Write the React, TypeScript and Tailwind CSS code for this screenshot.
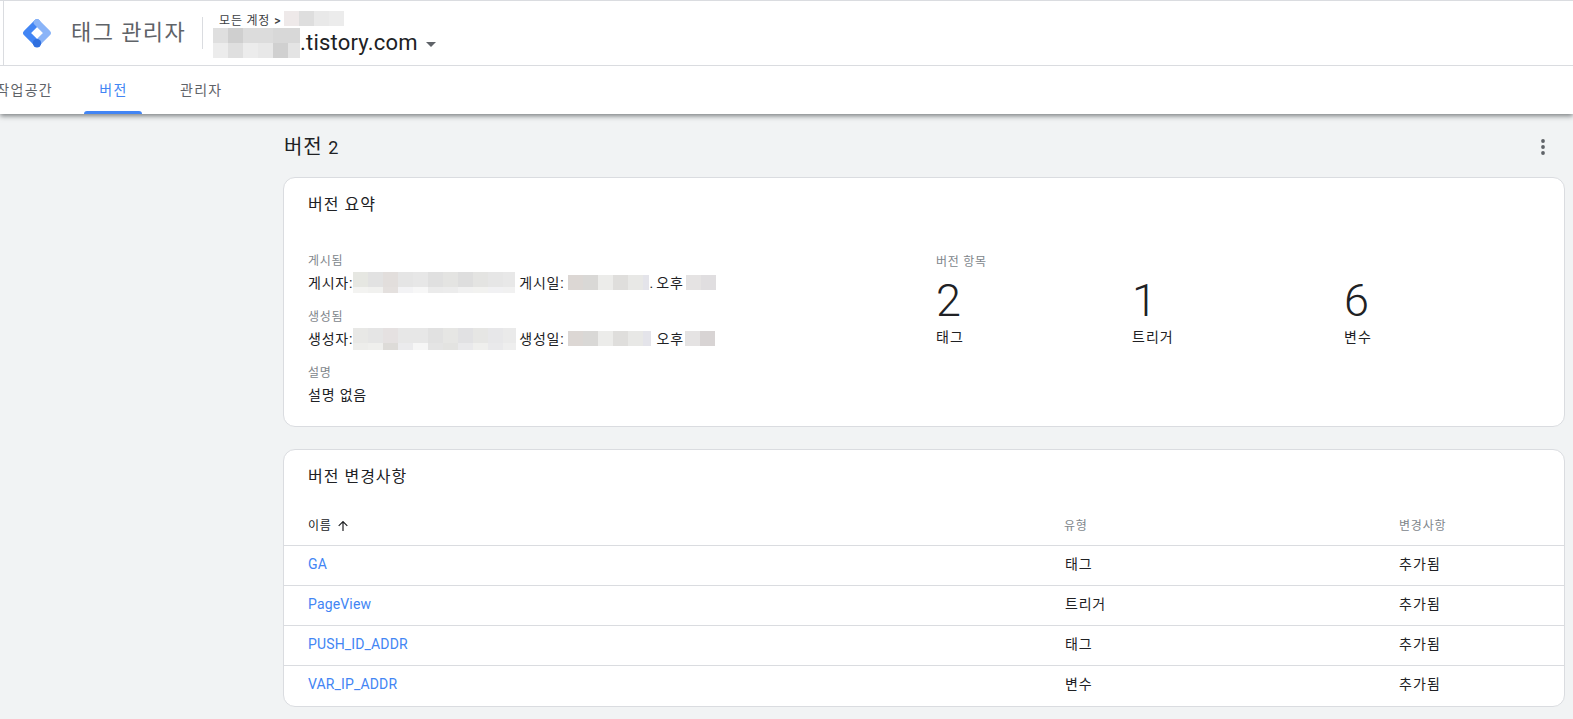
const font = { fontFamily: 'Roboto, "Noto Sans CJK KR", sans-serif' };

function Mosaic({ rows, cell = 15, heights, className = "" }: { rows: string[][]; cell?: number; heights?: number[]; className?: string }) {
  return (
    <span className={`inline-flex shrink-0 flex-col overflow-hidden align-middle ${className}`}>
      {rows.map((r, i) => (
        <span key={i} className="flex">
          {r.map((c, j) => (
            <span key={j} className="shrink-0" style={{ background: c, width: cell, height: heights ? heights[i] : cell }} />
          ))}
        </span>
      ))}
    </span>
  );
}

const nameRow1 = [
  ["#e6e7e2", "#e2e2e2", "#e2dedc", "#e5e5e5", "#e7e7e7", "#e0e0e0", "#e4e4e2", "#dedede", "#e4e4e2", "#e6e6e6", "#e8e8e8"],
  ["#f3f3f1", "#f1f1ef", "#e4e0de", "#f3f3f5", "#f7f7f7", "#ebebeb", "#ececec", "#f1f1f1", "#f2f2f0", "#f1f1f3", "#f1f1f1"],
];
const nameRow2 = [
  ["#e8e8e6", "#e5e5e5", "#e5e1e1", "#e7e7e7", "#e7e7e7", "#e1e1e1", "#e6e6e4", "#e1e1e3", "#e6e6e4", "#e7e7e9", "#eaeaea"],
  ["#ededeb", "#efefed", "#dddbd8", "#ebebed", "#f6f6f6", "#e4e4e4", "#e3e3e1", "#e9e9eb", "#efefed", "#e9e9eb", "#eeeeee"],
];
const date = ["#dcd7d4", "#d9d8d6", "#ececea", "#dfdedc", "#e8e8e6", "#e4e4ea"];

function Label({ children }: { children: React.ReactNode }) {
  return <div className="text-xs leading-4 tracking-[0.7px] text-[#80868b]">{children}</div>;
}

function Stat({ n, label, className }: { n: string; label: string; className: string }) {
  return (
    <div className={className}>
      <div className="text-[45px] font-light leading-[48px] text-[#202124]">{n}</div>
      <div className="mt-[2px] text-sm leading-5 tracking-[1px] text-[#202124]">{label}</div>
    </div>
  );
}

const rows = [
  ["GA", "태그"],
  ["PageView", "트리거"],
  ["PUSH_ID_ADDR", "태그"],
  ["VAR_IP_ADDR", "변수"],
];

export default function App() {
  return (
    <div style={font} className="h-[719px] overflow-hidden bg-[#f1f3f4]">
      <div className="relative z-10 bg-white shadow-[0_2px_5px_rgba(60,64,67,0.65)]">
        <header className="flex h-[66px] border-b border-t border-[#dadce0]">
          <div className="ml-[3px] flex flex-1 items-center border-l border-[#dadce0] pl-[18px]">
            <svg width="30" height="30" viewBox="0 0 30 30" className="shrink-0">
              <path d="M15 4.5 4.5 15 15 25.5" fill="none" stroke="#4285f4" strokeWidth="6.7" strokeLinejoin="round" strokeLinecap="round" />
              <path d="M15 4.5 25.5 15 15 25.5" fill="none" stroke="#8ab4f8" strokeWidth="6.7" strokeLinejoin="round" strokeLinecap="round" />
              <circle cx="15" cy="25.3" r="4.2" fill="#2f6fdf" />
            </svg>
            <div className="ml-[19px] text-[22px] leading-7 tracking-[1.4px] text-[#5f6368]">태그 관리자</div>
            <div className="ml-[16px] h-8 w-px bg-[#dadce0]" />
            <div className="ml-[10px]">
              <div className="flex h-[20px] items-center pl-[6px] pt-[4px] text-xs text-[#3c4043]">
                <span className="tracking-[0.8px]">모든 계정</span>
                <span className="ml-[4px] font-medium">&gt;</span>
                <Mosaic rows={[["#eee9e9", "#dedede", "#e9e9e9", "#ececec"]]} className="ml-[4px] -mt-1" />
              </div>
              <div className="flex h-[29px] items-center">
                <Mosaic rows={[["#dfdfdf", "#cfcfcf", "#dcdcdc", "#dcdcdc", "#d8d8d8", "#d8d8d8"], ["#ececec", "#dfdfdf", "#ececec", "#e8e8e8", "#d0d0d0", "#e4e4e4"]]} className="w-[87px]" />
                <span className="text-[22px] leading-7 tracking-[0.2px] text-[#202124]">.tistory.com</span>
                <svg width="10" height="5" viewBox="0 0 10 5" className="ml-2 mt-0.5"><path d="M0 0h10L5 5z" fill="#5f6368" /></svg>
              </div>
            </div>
          </div>
        </header>
        <nav className="flex h-[48px] text-sm tracking-[1.3px] text-[#5f6368]">
          <div className="flex w-[84px] items-center justify-end overflow-hidden"><span className="mr-[31px] shrink-0 whitespace-nowrap">작업공간</span></div>
          <div className="relative flex w-[58px] items-center justify-center pl-[1px] text-[#4285f4]">
            버전
            <span className="absolute bottom-0 left-0 right-0 h-[3px] rounded-t-[3px] bg-[#4285f4]" />
          </div>
          <div className="ml-[38px] flex items-center">관리자</div>
        </nav>
      </div>

      <main className="ml-[283px] mr-[8px]">
        <div className="flex h-[63px] items-center justify-between">
          <h1 className="ml-[1px] mt-[4px] text-xl font-normal tracking-[0.8px] text-[#202124]">버전 <span className="text-lg">2</span></h1>
          <svg width="4" height="16" viewBox="0 0 4 16" className="mr-[20px] mt-[2px]">
            <circle cx="2" cy="2" r="1.9" fill="#5f6368" />
            <circle cx="2" cy="8" r="1.9" fill="#5f6368" />
            <circle cx="2" cy="14" r="1.9" fill="#5f6368" />
          </svg>
        </div>

        <section className="h-[250px] rounded-xl border border-[#dadce0] bg-white px-6">
          <h2 className="pt-[17px] text-base font-normal leading-5 tracking-[1px] text-[#202124]">버전 요약</h2>
          <div className="mt-[38px] flex">
            <div className="w-[628px] text-sm leading-5 text-[#202124]">
              <Label>게시됨</Label>
              <div className="mt-[3px] flex h-[21px] items-center">
                <span className="tracking-[0.8px]">게시자:</span>
                <Mosaic rows={nameRow1} heights={[15, 6]} className="w-[162px]" />
                <span className="ml-[4px] tracking-[0.8px]">게시일:</span>
                <Mosaic rows={[date]} className="ml-[4px] w-[81px]" />
                <span>.</span>
                <span className="ml-[3px] tracking-[1px]">오후</span>
                <Mosaic rows={[["#e5e3e3", "#e0dee0"]]} className="ml-[2px]" />
              </div>
              <div className="mt-[16px]"><Label>생성됨</Label></div>
              <div className="mt-[3px] flex h-[21px] items-center">
                <span className="tracking-[0.8px]">생성자:</span>
                <Mosaic rows={nameRow2} heights={[15, 7]} className="w-[163px]" />
                <span className="ml-[3px] tracking-[0.8px]">생성일:</span>
                <Mosaic rows={[date]} className="ml-[4px] w-[83px]" />
                <span className="ml-[5px] tracking-[1px]">오후</span>
                <Mosaic rows={[["#e5e3e3", "#d8d4d4"]]} className="ml-[1px]" />
              </div>
              <div className="mt-[16px]"><Label>설명</Label></div>
              <div className="mt-[4px] leading-[21px] tracking-[0.8px]">설명 없음</div>
            </div>
            <div className="flex-1 pt-[1px]">
              <Label>버전 항목</Label>
              <div className="mt-[7px] flex">
                <Stat n="2" label="태그" className="w-[196px]" />
                <Stat n="1" label="트리거" className="w-[212px]" />
                <Stat n="6" label="변수" className="" />
              </div>
            </div>
          </div>
        </section>

        <section className="mt-[22px] h-[258px] overflow-hidden rounded-xl border border-[#dadce0] bg-white">
          <h2 className="px-6 pt-[17px] text-base font-normal leading-5 tracking-[1px] text-[#202124]">버전 변경사항</h2>
          <div className="mt-[19px] flex h-[40px] items-center border-b border-[#dadce0] text-xs tracking-[0.8px] text-[#80868b]">
            <div className="flex w-[780px] items-center pl-6 text-[#202124]">
              이름
              <svg width="12" height="12" viewBox="0 0 12 12" className="ml-[5px]"><path d="M6 11V1.5M1.7 5.8 6 1.5l4.3 4.3" stroke="#202124" strokeWidth="1.2" fill="none" /></svg>
            </div>
            <div className="w-[335px]">유형</div>
            <div>변경사항</div>
          </div>
          {rows.map(([name, type], i) => (
            <div key={name} className={`flex h-10 items-center text-sm text-[#202124] ${i < 3 ? "border-b border-[#dadce0]" : ""}`}>
              <div className="w-[781px] pb-[4px] pl-6 tracking-[0.15px] text-[#4285f4]">{name}</div>
              <div className="w-[334px] pb-[4px] tracking-[0.8px]">{type}</div>
              <div className="pb-[4px] tracking-[1.1px]">추가됨</div>
            </div>
          ))}
        </section>
      </main>
    </div>
  );
}
